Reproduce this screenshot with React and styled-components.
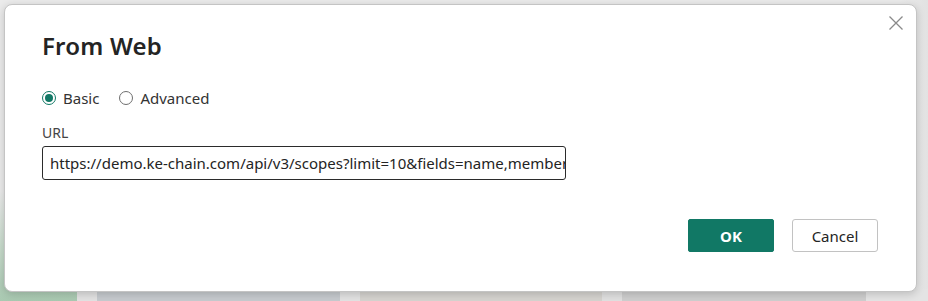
import React from "react";
import styled, { createGlobalStyle } from "styled-components";

const Global = createGlobalStyle`
  html, body { margin: 0; padding: 0; }
  body { background: #ebebeb; font-family: "Noto Sans", "Open Sans", sans-serif; }
`;

const Page = styled.div`
  width: 928px;
  height: 301px;
  display: grid;
  overflow: hidden;
  background: linear-gradient(to right, #ebebeb 0, #ebebeb 900px, #e2e2e2 928px);
`;

const Backdrop = styled.div`
  grid-area: 1 / 1;
  display: flex;
  flex-direction: column;
`;

const BackTop = styled.div`
  flex: 1;
`;

const Strip = styled.div`
  height: 110px;
  display: flex;
  align-items: flex-end;
`;

const Panel = styled.div`
  width: ${(p) => p.$w}px;
  height: ${(p) => p.$h || 12}px;
  background: ${(p) => p.$bg};
`;

const Dialog = styled.div`
  grid-area: 1 / 1;
  margin: 4px 11px 9px 4px;
  background: #fff;
  border: 1px solid #c4c4c4;
  border-radius: 8px;
  box-shadow: 0 2px 8px rgba(0, 0, 0, 0.18);
  position: relative;
  display: flex;
  flex-direction: column;
  padding: 25px 38px 0 37px;
  color: #242424;
`;

const Close = styled.button`
  position: absolute;
  top: 7px;
  right: 9px;
  width: 22px;
  height: 22px;
  border: none;
  background: none;
  padding: 0;
  display: flex;
  align-items: center;
  justify-content: center;
`;

const Title = styled.h1`
  margin: 0;
  font-size: 24px;
  line-height: 32px;
  font-weight: 600;
  letter-spacing: 0.2px;
  color: #242424;
`;

const RadioGroup = styled.div`
  margin-top: 26px;
  display: flex;
  align-items: center;
  gap: 20px;
  height: 20px;
`;

const RadioLabel = styled.label`
  display: flex;
  align-items: center;
  gap: 7px;
  font-size: 15px;
  color: #333;
`;

const Dot = styled.span`
  width: 12px;
  height: 12px;
  border-radius: 50%;
  border: 1px solid ${(p) => (p.$on ? "#117865" : "#6e6e6e")};
  display: flex;
  align-items: center;
  justify-content: center;
  &::after {
    content: "";
    width: 8px;
    height: 8px;
    border-radius: 50%;
    background: ${(p) => (p.$on ? "#117865" : "transparent")};
  }
`;

const FieldLabel = styled.div`
  margin-top: 15px;
  font-size: 14px;
  line-height: 20px;
  color: #444;
`;

const Input = styled.div`
  margin-top: 3px;
  width: 515px;
  height: 32px;
  border: 1px solid #2b2b2b;
  border-radius: 3px;
  box-sizing: content-box;
  display: flex;
  align-items: center;
  padding-left: 7px;
  overflow: hidden;
  white-space: nowrap;
  text-overflow: clip;
  font-size: 15px;
  color: #242424;
`;

const Footer = styled.div`
  margin-top: 39px;
  display: flex;
  justify-content: flex-end;
  gap: 18px;
`;

const Button = styled.button`
  width: 86px;
  height: 33px;
  box-sizing: border-box;
  border-radius: ${(p) => (p.$primary ? "2px" : "3px")};
  border: 1px solid ${(p) => (p.$primary ? "#117865" : "#c2c2c2")};
  background: ${(p) => (p.$primary ? "#117865" : "#fff")};
  color: ${(p) => (p.$primary ? "#fff" : "#242424")};
  font-family: inherit;
  font-size: 15px;
  font-weight: ${(p) => (p.$primary ? 700 : 400)};
  padding: 0;
`;

export default function App() {
  return (
    <>
      <Global />
      <Page>
        <Backdrop>
          <BackTop />
          <Strip>
            <Panel $w={77} $h={110} $bg="linear-gradient(to bottom, #ebebeb 0%, #c9dccd 50%, #a9c9b1 100%)" />
            <Panel $w={20} $bg="#e2e2e2" />
            <Panel $w={243} $bg="#c6cace" />
            <Panel $w={20} $bg="#e2e2e2" />
            <Panel $w={242} $bg="#d5d3cf" />
            <Panel $w={20} $bg="#e0e0e0" />
            <Panel $w={244} $bg="#cecece" />
            <Panel $w={62} $bg="#e4e4e4" />
          </Strip>
        </Backdrop>
        <Dialog>
          <Close aria-label="Close">
            <svg width="16" height="16" viewBox="0 0 16 16">
              <path d="M1.5 1.5 L14.5 14.5 M14.5 1.5 L1.5 14.5" stroke="#8a8a8a" strokeWidth="1.3" fill="none" />
            </svg>
          </Close>
          <Title>From Web</Title>
          <RadioGroup>
            <RadioLabel>
              <Dot $on />
              Basic
            </RadioLabel>
            <RadioLabel>
              <Dot />
              Advanced
            </RadioLabel>
          </RadioGroup>
          <FieldLabel>URL</FieldLabel>
          <Input>https://demo.ke-chain.com/api/v3/scopes?limit=10&amp;fields=name,members</Input>
          <Footer>
            <Button $primary>OK</Button>
            <Button>Cancel</Button>
          </Footer>
        </Dialog>
      </Page>
    </>
  );
}
